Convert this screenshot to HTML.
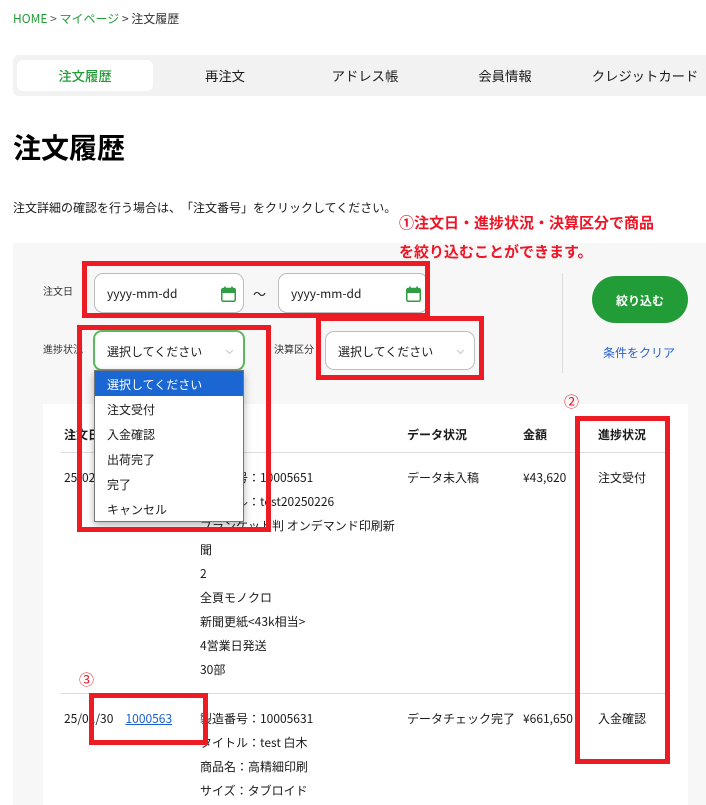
<!DOCTYPE html>
<html lang="ja"><head><meta charset="utf-8"><title>注文履歴</title>
<style>
*{box-sizing:border-box}
html,body{margin:0;padding:0}
body{width:706px;height:805px;overflow:hidden;position:relative;background:#fff;color:#1a1a1a;font-family:"Noto Sans CJK JP","Liberation Sans",sans-serif;font-size:12px}
.a{position:absolute}
.t{position:absolute;white-space:nowrap;line-height:20px;height:20px}
.tab{position:absolute;top:66px;width:140px;text-align:center;font-size:13.33px;line-height:20px;white-space:nowrap}
.box{position:absolute;background:#fff;border:1px solid #bdbdbd;border-radius:9px}
.red{position:absolute;border:5px solid #ed1c24}
.th{font-weight:700}
.opt{position:absolute;left:0;width:148px;height:25px;line-height:25px;padding-left:12px;white-space:nowrap}
</style></head><body>
<div class="t" style="left:13px;top:9px;color:#229c37">HOME <span style="color:#555">&gt;</span> マイページ <span style="color:#333">&gt; 注文履歴</span></div>

<div class="a" style="left:13px;top:55px;width:693px;height:41px;background:#f2f2f2;border-radius:6px 0 0 6px"></div>
<div class="a" style="left:17px;top:60px;width:136px;height:31px;background:#fff;border-radius:6px"></div>
<div class="tab" style="left:15px;color:#229c37;font-weight:500">注文履歴</div>
<div class="tab" style="left:155px">再注文</div>
<div class="tab" style="left:295px">アドレス帳</div>
<div class="tab" style="left:435px">会員情報</div>
<div class="tab" style="left:575px">クレジットカード</div>

<div class="t" style="left:13px;top:127px;font-size:28px;font-weight:700;line-height:40px;height:40px;color:#000">注文履歴</div>
<div class="t" style="left:13px;top:198px;text-spacing-trim:space-all">注文詳細の確認を行う場合は、「注文番号」をクリックしてください。</div>

<div class="a" style="left:13px;top:243px;width:693px;height:562px;background:#f7f7f7"></div>
<div class="a" style="left:43px;top:404px;width:645px;height:401px;background:#fff"></div>

<div class="t" style="left:43px;top:281px;font-size:10px;color:#333">注文日</div>
<div class="box" style="left:94px;top:273px;width:150px;height:40px"></div>
<div class="t" style="left:107px;top:284px;font-size:12px">yyyy-mm-dd</div>
<svg class="a" style="left:221px;top:286px" width="15" height="16" viewBox="0 0 15 16"><rect x=".75" y="2.5" width="13.5" height="12.75" rx="1.5" fill="#fff" stroke="#2f9e44" stroke-width="1.5"/><path d="M1 3.5a1 1 0 0 1 1-1h11a1 1 0 0 1 1 1V7H1z" fill="#2f9e44"/><path d="M4 .5v3M11 .5v3" stroke="#2f9e44" stroke-width="1.6"/></svg>
<div class="t" style="left:253px;top:284px;font-size:13px">～</div>
<div class="box" style="left:278px;top:273px;width:150px;height:40px"></div>
<div class="t" style="left:291px;top:284px;font-size:12px">yyyy-mm-dd</div>
<svg class="a" style="left:406px;top:286px" width="15" height="16" viewBox="0 0 15 16"><rect x=".75" y="2.5" width="13.5" height="12.75" rx="1.5" fill="#fff" stroke="#2f9e44" stroke-width="1.5"/><path d="M1 3.5a1 1 0 0 1 1-1h11a1 1 0 0 1 1 1V7H1z" fill="#2f9e44"/><path d="M4 .5v3M11 .5v3" stroke="#2f9e44" stroke-width="1.6"/></svg>

<div class="t" style="left:43px;top:339px;font-size:10px;color:#333">進捗状況</div>
<div class="box" style="left:93px;top:330px;width:152px;height:41px;border:2px solid #5cb85c"></div>
<div class="t" style="left:107px;top:342px">選択してください</div>
<svg class="a" style="left:225px;top:349px" width="9" height="6" viewBox="0 0 9 6"><path d="M1 1l3.5 3.5L8 1" fill="none" stroke="#c8c8c8" stroke-width="1"/></svg>

<div class="t" style="left:274px;top:339px;font-size:10px;color:#333">決算区分</div>
<div class="box" style="left:325px;top:331px;width:150px;height:39px"></div>
<div class="t" style="left:338px;top:342px">選択してください</div>
<svg class="a" style="left:456px;top:349px" width="9" height="6" viewBox="0 0 9 6"><path d="M1 1l3.5 3.5L8 1" fill="none" stroke="#c8c8c8" stroke-width="1"/></svg>

<div class="a" style="left:562px;top:273px;width:1px;height:100px;background:#dcdcdc"></div>
<div class="a" style="left:592px;top:276px;width:96px;height:47px;border-radius:24px;background:#229c37;color:#fff;font-weight:700;text-align:center;line-height:49px">絞り込む</div>
<div class="t" style="left:603px;top:343px;color:#2a62cc">条件をクリア</div>

<div class="t th" style="left:64px;top:425px">注文日</div>
<div class="t th" style="left:407px;top:425px">データ状況</div>
<div class="t th" style="left:523px;top:425px">金額</div>
<div class="t th" style="left:598px;top:425px">進捗状況</div>
<div class="a" style="left:61px;top:452px;width:604px;height:1px;background:#dcdcdc"></div>

<div class="t" style="left:64px;top:468px">25/02/26</div>
<div class="t" style="left:200px;top:468px">製造番号：10005651</div>
<div class="t" style="left:200px;top:492px">タイトル：test20250226</div>
<div class="t" style="left:200px;top:516px">ブランケット判 オンデマンド印刷新</div>
<div class="t" style="left:200px;top:540px">聞</div>
<div class="t" style="left:200px;top:564px">2</div>
<div class="t" style="left:200px;top:588px">全頁モノクロ</div>
<div class="t" style="left:200px;top:612px">新聞更紙&lt;43k相当&gt;</div>
<div class="t" style="left:200px;top:636px">4営業日発送</div>
<div class="t" style="left:200px;top:660px">30部</div>
<div class="t" style="left:407px;top:468px">データ未入稿</div>
<div class="t" style="left:523px;top:468px">¥43,620</div>
<div class="t" style="left:598px;top:468px">注文受付</div>
<div class="a" style="left:61px;top:693px;width:604px;height:1px;background:#dcdcdc"></div>

<div class="t" style="left:64px;top:709px">25/01/30</div>
<div class="t" style="left:125.5px;top:709px;color:#1a5fd0;text-decoration:underline">1000563</div>
<div class="t" style="left:200px;top:709px">製造番号：10005631</div>
<div class="t" style="left:200px;top:733px">タイトル：test 白木</div>
<div class="t" style="left:200px;top:757px">商品名：高精細印刷</div>
<div class="t" style="left:200px;top:781px">サイズ：タブロイド</div>
<div class="t" style="left:407px;top:709px">データチェック完了</div>
<div class="t" style="left:523px;top:709px">¥661,650</div>
<div class="t" style="left:598px;top:709px">入金確認</div>

<div class="a" style="left:94px;top:370px;width:150px;height:152px;background:#fff;border:1px solid #767676;box-shadow:0 3px 8px rgba(0,0,0,.3)">
<div class="opt" style="top:0;background:#1a66d2;color:#fff;line-height:27px">選択してください</div>
<div class="opt" style="top:26px">注文受付</div>
<div class="opt" style="top:51px">入金確認</div>
<div class="opt" style="top:76px">出荷完了</div>
<div class="opt" style="top:101px">完了</div>
<div class="opt" style="top:126px">キャンセル</div>
</div>

<div class="red" style="left:82px;top:261px;width:348px;height:57px"></div>
<div class="red" style="left:77px;top:325px;width:194px;height:207px"></div>
<div class="red" style="left:316px;top:316px;width:168px;height:64px"></div>
<div class="red" style="left:575px;top:416px;width:95px;height:348px"></div>
<div class="red" style="left:89px;top:693px;width:119px;height:52px"></div>

<div class="t" style="left:399px;top:213px;font-size:15px;font-weight:700;color:#ee1526">①注文日・進捗状況・決算区分で商品</div>
<div class="t" style="left:399px;top:242px;font-size:15px;font-weight:700;color:#ee1526">を絞り込むことができます。</div>
<div class="t" style="left:564px;top:392px;font-size:15px;color:#ee1526">②</div>
<div class="t" style="left:79px;top:670px;font-size:15px;color:#ee1526">③</div>
</body></html>
